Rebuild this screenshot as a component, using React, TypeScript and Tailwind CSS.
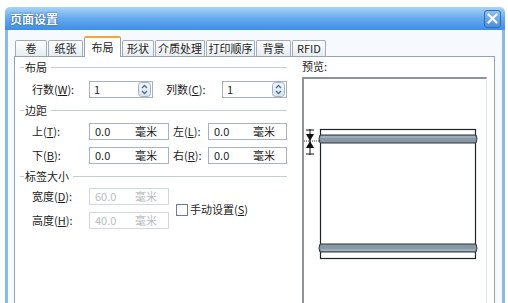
import React from "react";

const TABS: { label: string; w: number }[] = [
  { label: "卷", w: 32 },
  { label: "纸张", w: 35 },
  { label: "布局", w: 37 },
  { label: "形状", w: 32 },
  { label: "介质处理", w: 50 },
  { label: "打印顺序", w: 49 },
  { label: "背景", w: 35 },
  { label: "RFID", w: 34 },
];
const ACTIVE = "布局";

function GroupHeader({ title, className = "" }: { title: string; className?: string }) {
  return (
    <div className={`flex items-center h-[14px] ${className}`}>
      <span className="w-[4px] h-px bg-[#c5ccd3]" />
      <span className="px-[1px] leading-none">{title}</span>
      <span className="flex-1 h-px bg-[#c5ccd3] ml-[3px]" />
    </div>
  );
}

function Label({ text, k, w }: { text: string; k: string; w: number }) {
  return (
    <span className="shrink-0 leading-none" style={{ width: w }}>
      {text}(<u>{k}</u>):
    </span>
  );
}

function Spinner() {
  return (
    <svg width="13" height="15" viewBox="0 0 13 15" className="shrink-0">
      <defs>
        <linearGradient id="sp" x1="0" y1="0" x2="0" y2="1">
          <stop offset="0" stopColor="#f4f8fc" />
          <stop offset="1" stopColor="#d6e3ef" />
        </linearGradient>
      </defs>
      <rect x="0.5" y="0.5" width="12" height="14" rx="3" fill="url(#sp)" stroke="#9fb3c6" />
      <path d="M4 6 L6.5 3.5 L9 6" fill="none" stroke="#4d6e8f" strokeWidth="1.3" />
      <path d="M4 9 L6.5 11.5 L9 9" fill="none" stroke="#4d6e8f" strokeWidth="1.3" />
    </svg>
  );
}

function SpinInput({ value, w }: { value: string; w: number }) {
  return (
    <div
      className="h-[17px] flex items-center justify-between pl-[4px] pr-[1px] border border-[#a7b2be] bg-white shrink-0"
      style={{ width: w }}
    >
      <span className="leading-none">{value}</span>
      <Spinner />
    </div>
  );
}

function UnitInput({ value, w, disabled }: { value: string; w: number; disabled?: boolean }) {
  return (
    <div
      className={`h-[17px] flex items-center justify-between pl-[5px] pr-[11px] border bg-white shrink-0 ${
        disabled ? "border-[#d3d8de] text-[#b9bcc0]" : "border-[#a7b2be]"
      }`}
      style={{ width: w }}
    >
      <span className="leading-none">{value}</span>
      <span className="leading-none">毫米</span>
    </div>
  );
}

function LabelPreview() {
  return (
    <svg width="182" height="226" viewBox="0 0 182 226">
      {/* gap marker */}
      <line x1="6" y1="50" x2="6" y2="76" stroke="#111" strokeWidth="1" />
      <line x1="2" y1="51" x2="10" y2="51" stroke="#111" strokeWidth="1" />
      <line x1="2" y1="75" x2="10" y2="75" stroke="#111" strokeWidth="1" />
      <path d="M2 55 L10 55 L6 62 Z" fill="#111" />
      <path d="M2 69 L10 69 L6 62 Z" fill="#111" />
      <line x1="0" y1="62" x2="15" y2="62" stroke="#333" strokeWidth="1" strokeDasharray="1 1" />
      {/* label outline */}
      <rect x="16.5" y="50.5" width="155" height="129" fill="#fff" stroke="#1d232a" strokeWidth="1.2" />
      {/* top band */}
      <path d="M16 56 Q14 59.5 16 64 L172 64 Q174 59.5 172 56 Z" fill="#8797a3" stroke="#2c3540" strokeWidth="1" />
      <line x1="17" y1="58" x2="171" y2="58" stroke="#b8c4cc" strokeWidth="1" />
      {/* bottom band */}
      <path d="M16 165 Q14 169.5 16 173 L172 173 Q174 169.5 172 165 Z" fill="#8797a3" stroke="#2c3540" strokeWidth="1" />
      <line x1="17" y1="171" x2="171" y2="171" stroke="#b8c4cc" strokeWidth="1" />
    </svg>
  );
}

export default function App() {
  return (
    <div className="w-[508px] h-[303px] overflow-hidden bg-white pt-[7px] pl-[5px] pr-[3px] font-['Noto_Sans_CJK_SC','Noto_Sans',sans-serif] text-[11px] text-[#1c1c1c]">
      <div className="h-full flex flex-col rounded-t-[5px] overflow-hidden">
        {/* title bar */}
        <div className="h-[23px] shrink-0 flex items-center justify-between pl-[5px] pr-[4px] bg-gradient-to-b from-[#a9d3f7] via-[#65aaee] to-[#3f8de3]">
          <span className="text-white font-bold text-[12px] leading-none [text-shadow:0_0_2px_#1c5aa8,0_0_1px_#1c5aa8]">
            页面设置
          </span>
          <div className="w-[17px] h-[18px] rounded-[3px] border border-[#2e6fb8] bg-gradient-to-b from-[#8cc0f0] to-[#4b8fd8] flex items-center justify-center">
            <svg width="11" height="11" viewBox="0 0 11 11">
              <path d="M1.5 1.5 L9.5 9.5 M9.5 1.5 L1.5 9.5" stroke="#fff" strokeWidth="2.2" strokeLinecap="round" />
            </svg>
          </div>
        </div>

        {/* body */}
        <div className="flex-1 flex border-l-[3px] border-r-[3px] border-[#87bbea] bg-[#f6f9fd]">
          <div className="flex-1 flex flex-col pl-[6px] pr-[7px] pt-[6px]">
            {/* tabs */}
            <div className="h-[20px] flex items-end gap-[1px] pl-[1px] shrink-0">
              {TABS.map((t) => {
                const on = t.label === ACTIVE;
                return (
                  <div
                    key={t.label}
                    style={{ width: t.w }}
                    className={
                      on
                        ? "relative z-10 -mb-px h-[21px] flex items-center justify-center bg-white border border-b-0 border-[#97a3af] border-t-2 border-t-[#f2a53a] rounded-t-[2px] pb-[1px]"
                        : "h-[16px] flex items-center justify-center bg-gradient-to-b from-white to-[#e6ecf2] border border-b-0 border-[#a3adb8] rounded-t-[2px]"
                    }
                  >
                    <span className="leading-none">{t.label}</span>
                  </div>
                );
              })}
            </div>

            {/* panel */}
            <div className="flex-1 flex border border-[#97a3af] bg-white">
              {/* left: settings */}
              <div className="w-[274px] shrink-0 flex flex-col pl-[5px] pr-[2px]">
                <GroupHeader title="布局" className="mt-[3px]" />
                <div className="flex items-center mt-[7px] pl-[12px]">
                  <Label text="行数" k="W" w={57} />
                  <SpinInput value="1" w={64} />
                  <span className="w-[13px]" />
                  <Label text="列数" k="C" w={56} />
                  <SpinInput value="1" w={65} />
                </div>

                <GroupHeader title="边距" className="mt-[5px]" />
                <div className="flex items-center mt-[6px] pl-[12px]">
                  <Label text="上" k="T" w={57} />
                  <UnitInput value="0.0" w={80} />
                  <span className="w-[4px]" />
                  <Label text="左" k="L" w={35} />
                  <UnitInput value="0.0" w={79} />
                </div>
                <div className="flex items-center mt-[7px] pl-[12px]">
                  <Label text="下" k="B" w={57} />
                  <UnitInput value="0.0" w={80} />
                  <span className="w-[4px]" />
                  <Label text="右" k="R" w={35} />
                  <UnitInput value="0.0" w={79} />
                </div>

                <GroupHeader title="标签大小" className="mt-[5px]" />
                <div className="flex items-center mt-[5px] pl-[12px]">
                  <div className="flex flex-col gap-[7px]">
                    <div className="flex items-center">
                      <Label text="宽度" k="D" w={57} />
                      <UnitInput value="60.0" w={80} disabled />
                    </div>
                    <div className="flex items-center">
                      <Label text="高度" k="H" w={57} />
                      <UnitInput value="40.0" w={80} disabled />
                    </div>
                  </div>
                  <div className="flex items-center ml-[7px] mt-[2px]">
                    <span className="w-[12px] h-[12px] border border-[#6f7d8a] bg-white mr-[2px]" />
                    <span className="leading-none">
                      手动设置(<u>S</u>)
                    </span>
                  </div>
                </div>
              </div>

              {/* right: preview */}
              <div className="flex-1 flex flex-col pl-[13px] pr-[7px]">
                <span className="mt-[4px] leading-none">预览:</span>
                <div className="mt-[5px] flex-1 border-t-2 border-l-2 border-[#8e939a] border-r border-r-[#e3e6ea]">
                  <LabelPreview />
                </div>
              </div>
            </div>
          </div>
        </div>
      </div>
    </div>
  );
}
